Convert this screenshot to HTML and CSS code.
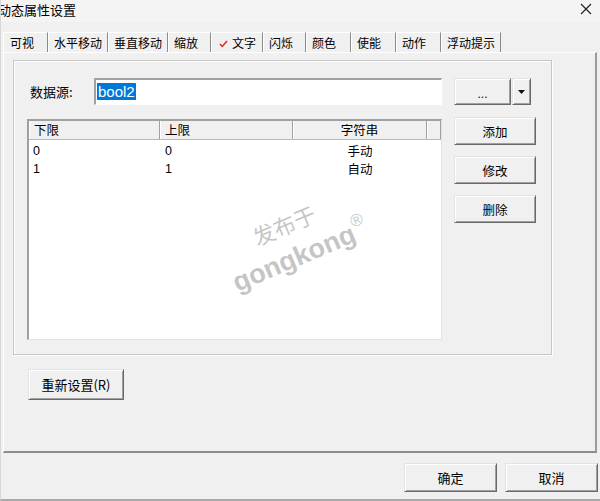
FILE: index.html
```html
<!DOCTYPE html>
<html lang="zh-CN">
<head>
<meta charset="UTF-8">
<title>动态属性设置</title>
<link rel="stylesheet" href="styles.css">
</head>
<body>

<div class="window">
    <div class="titlebar">
        <span class="title">动态属性设置</span>
        <svg class="close" width="12" height="12" viewBox="0 0 12 12">
            <path d="M1 1 L11 11 M11 1 L1 11" stroke="#222" stroke-width="1.2" fill="none"/>
        </svg>
    </div>

    <div class="tabs">
        <div class="tab">可视</div>
        <div class="tab">水平移动</div>
        <div class="tab">垂直移动</div>
        <div class="tab">缩放</div>
        <div class="tab active">
            <svg class="check" width="9" height="8" viewBox="0 0 9 8">
                <path d="M1 4 L3.3 6.5 L8 1" stroke="#e02020" stroke-width="1.4" fill="none"/>
            </svg>文字
        </div>
        <div class="tab">闪烁</div>
        <div class="tab">颜色</div>
        <div class="tab">使能</div>
        <div class="tab">动作</div>
        <div class="tab">浮动提示</div>
    </div>

    <div class="panel">
        <div class="group">
            <div class="source-row">
                <label class="source-label">数据源:</label>
                <div class="input"><span class="selected">bool2</span></div>
                <button class="btn btn-more">...</button>
                <button class="btn btn-drop">
                    <svg width="7" height="4" viewBox="0 0 7 4"><path d="M0 0 H7 L3.5 4 Z" fill="#111"/></svg>
                </button>
            </div>

            <div class="list-row">
                <div class="list">
                    <div class="list-head">
                        <div class="col c1">下限</div>
                        <div class="col c2">上限</div>
                        <div class="col c3">字符串</div>
                        <div class="col c4"></div>
                    </div>
                    <div class="list-item">
                        <div class="col c1">0</div>
                        <div class="col c2">0</div>
                        <div class="col c3">手动</div>
                    </div>
                    <div class="list-item">
                        <div class="col c1">1</div>
                        <div class="col c2">1</div>
                        <div class="col c3">自动</div>
                    </div>
                </div>

                <div class="side-buttons">
                    <button class="btn">添加</button>
                    <button class="btn">修改</button>
                    <button class="btn">删除</button>
                </div>
            </div>
        </div>

        <button class="btn btn-reset">重新设置(R)</button>
    </div>

    <div class="footer">
        <button class="btn btn-ok">确定</button>
        <button class="btn btn-ok">取消</button>
    </div>

    <div class="watermark">
        <div class="wm-cn">发布于</div>
        <div class="wm-en">gongkong<sup>®</sup></div>
    </div>
</div>

</body>
</html>
```

FILE: styles.css
```css
body {
    margin: 0;
    background: #f0f0f0;
    font-family: "Noto Sans CJK SC", sans-serif;
    font-size: 12.5px;
    color: #000;
}
.window {
    position: relative;
    width: 600px;
    height: 501px;
    overflow: hidden;
    box-sizing: border-box;
    border-bottom: 2px solid #a8a8a8;
    border-left: 1px solid #d8d8d8;
}
.titlebar {
    height: 22px;
    background: #f4f4f4;
    display: flex;
    justify-content: space-between;
    align-items: center;
}
.title {
    margin-left: -3px;
    margin-top: -3px;
    font-size: 13px;
    line-height: 14px;
}
.close {
    margin-right: 8px;
    margin-top: -4px;
}

/* tab strip */
.tabs {
    display: flex;
    margin: 10px 0 0 2px;
    height: 20px;
}
.tab {
    box-sizing: border-box;
    height: 20px;
    min-width: 45px;
    padding: 0 5px 0 5px;
    font-size: 12px;
    line-height: 20px;
    border-left: 1px solid #fff;
    border-right: 1px solid #8a8a8a;
    border-top: 1px solid #fff;
    white-space: nowrap;
}
.tab:nth-child(1) {
    padding-left: 6px;
}
.tab:nth-child(4),
.tab:nth-child(6) {
    min-width: 43px;
}
.tab.active {
    width: 52px;
    padding-left: 7px;
}
.check {
    margin-right: 4px;
    vertical-align: 0;
}

/* page of the tab control */
.panel {
    box-sizing: border-box;
    margin-left: 2px;
    width: 594px;
    height: 401px;
    border-left: 1px solid #fff;
    border-top: 1px solid #fff;
    border-right: 2px solid #9a9a9a;
    border-bottom: 2px solid #8c8c8c;
}
.group {
    box-sizing: border-box;
    margin: 7px 0 0 9px;
    width: 539px;
    height: 295px;
    border: 1px solid #c6c6c6;
    box-shadow: 1px 1px 0 #fff, inset 1px 1px 0 #fff;
    padding: 17px 0 0 13px;
}
.source-row {
    display: flex;
    align-items: center;
    height: 27px;
}
.source-label {
    width: 67px;
    padding-left: 3px;
    box-sizing: border-box;
    font-size: 13px;
}
.input {
    box-sizing: border-box;
    width: 348px;
    height: 27px;
    background: #fff;
    border-top: 2px solid #a0a0a0;
    border-left: 2px solid #a0a0a0;
    border-right: 1px solid #fff;
    border-bottom: 1px solid #fff;
    padding: 2px 0 0 1px;
}
.selected {
    display: inline-block;
    background: #0078d7;
    color: #fff;
    font-family: "Liberation Sans", sans-serif;
    font-size: 15px;
    line-height: 17px;
    padding: 0 1px;
}

.btn {
    box-sizing: border-box;
    background: #f0f0f0;
    border: 1px solid;
    border-color: #e3e3e3 #696969 #696969 #e3e3e3;
    box-shadow: inset 1px 1px 0 #fff, inset -1px -1px 0 #a0a0a0;
    font-family: "Noto Sans CJK SC", sans-serif;
    font-size: 12.5px;
    color: #000;
    padding: 0;
    margin: 0;
}
.btn-more {
    margin-left: 12px;
    width: 57px;
    height: 27px;
    font-family: "Liberation Sans", sans-serif;
    font-size: 12px;
    padding-top: 4px;
}
.btn-drop {
    margin-left: 1px;
    width: 19px;
    height: 27px;
    display: flex;
    align-items: center;
    justify-content: center;
}

.list-row {
    display: flex;
    margin-top: 14px;
}
.list {
    box-sizing: border-box;
    width: 415px;
    height: 221px;
    background: #fff;
    border-top: 2px solid #a0a0a0;
    border-left: 2px solid #a0a0a0;
    border-right: 1px solid #e3e3e3;
    border-bottom: 1px solid #e3e3e3;
}
.list-head {
    display: flex;
    height: 18px;
    background: #f0f0f0;
    border-bottom: 1px solid #b8b8b8;
    line-height: 18px;
    font-size: 12.5px;
}
.list-head .col {
    box-sizing: border-box;
    border-right: 1px solid #a0a0a0;
    box-shadow: inset 1px 0 0 #fff;
}
.col {
    padding-left: 5px;
    white-space: nowrap;
}
.c1 { width: 131px; }
.c2 { width: 133px; }
.c3 { width: 134px; text-align: center; padding-left: 0; }
.c4 { flex: 1; }
.list-item {
    display: flex;
    height: 18px;
    line-height: 18px;
    font-size: 12.5px;
}
.list-head + .list-item {
    margin-top: 2px;
}
.list-item .c1,
.list-item .c2 {
    font-family: "Liberation Sans", sans-serif;
    font-size: 12.5px;
    padding-left: 4px;
}
.list-item .c1 { width: 131px; box-sizing: border-box; }
.list-item .c2 { width: 133px; box-sizing: border-box; padding-left: 5px; }

.side-buttons {
    display: flex;
    flex-direction: column;
    gap: 11px;
    margin: -2px 0 0 12px;
}
.side-buttons .btn {
    width: 82px;
    height: 28px;
}

.btn-reset {
    display: block;
    margin: 14px 0 0 24px;
    width: 96px;
    height: 31px;
    font-size: 13px;
}

.footer {
    display: flex;
    justify-content: flex-end;
    gap: 8px;
    margin-top: 10px;
    padding-right: 2px;
}
.btn-ok {
    width: 93px;
    height: 29px;
    font-size: 13px;
}

/* site watermark over the list */
.watermark {
    position: absolute;
    left: 222px;
    top: 222px;
    transform: rotate(-23deg);
    transform-origin: left top;
    color: rgba(140, 140, 140, 0.5);
    pointer-events: none;
}
.wm-cn {
    font-size: 22px;
    line-height: 24px;
    margin-left: 22px;
    margin-top: 14px;
}
.wm-en {
    font-family: "Liberation Sans", sans-serif;
    font-weight: bold;
    font-size: 27px;
    line-height: 26px;
    margin-left: -14px;
}
.wm-en sup {
    font-size: 17px;
    font-weight: normal;
    vertical-align: 14px;
    margin-left: 1px;
}
```
